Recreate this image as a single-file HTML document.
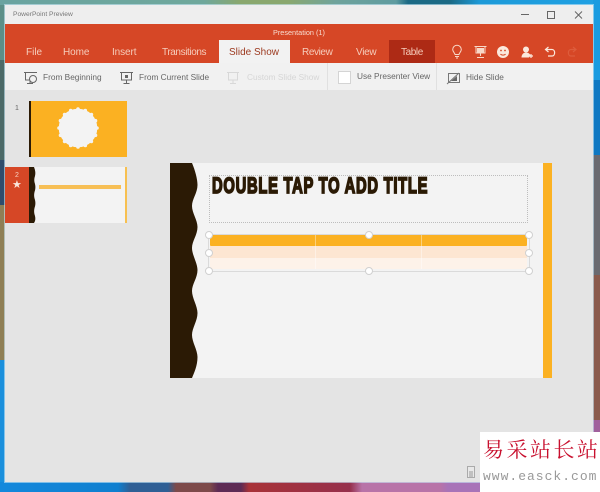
<!DOCTYPE html>
<html><head><meta charset="utf-8">
<style>
html,body{margin:0;padding:0;width:600px;height:492px;overflow:hidden;font-family:"Liberation Sans",sans-serif}
div,span{position:absolute}
.t{white-space:nowrap;line-height:14px}
.tab{top:46px;font-size:10px;color:#f6cdbc;white-space:nowrap;line-height:14px}
.rb{top:71px;font-size:8.300px;color:#666;white-space:nowrap;line-height:13px}
.h{width:6px;height:6px;border-radius:50%;background:#fff;border:1px solid #d0d0d0}
svg{position:absolute;overflow:visible}
</style></head>
<body>
<div style="left:0;top:0;width:600px;height:492px;filter:blur(.3px);overflow:hidden">
<div style="left:0;top:0;width:600px;height:492px;background:linear-gradient(90deg,#6aa3a0 0,#6fa89c 34%,#8aa86f 40%,#8aa86f 48%,#6fa39c 56%,#5f9ca0 66%,#1b6a85 68%,#1b6a85 75%,#1d9ad8 80%,#1fa0e3 100%)"></div>
<div style="left:0;top:5px;width:5px;height:55px;background:#5c8f88"></div>
<div style="left:0;top:60px;width:5px;height:100px;background:#4c6a68"></div>
<div style="left:0;top:160px;width:5px;height:45px;background:#2f4c6c"></div>
<div style="left:0;top:205px;width:5px;height:155px;background:#8f7f55"></div>
<div style="left:0;top:360px;width:5px;height:132px;background:#1a8fdc"></div>
<div style="left:593px;top:0;width:7px;height:80px;background:#1a9be0"></div>
<div style="left:593px;top:80px;width:7px;height:75px;background:#0f78c2"></div>
<div style="left:593px;top:155px;width:7px;height:120px;background:#6a6a70"></div>
<div style="left:593px;top:275px;width:7px;height:145px;background:#8a5a4c"></div>
<div style="left:593px;top:420px;width:7px;height:72px;background:#a0609c"></div>
<div style="left:0;top:482px;width:600px;height:10px;background:linear-gradient(90deg,#1488dc 0,#0f7fcf 118px,#2f5f95 130px,#2f5f95 168px,#7d4a4a 176px,#7d4a4a 210px,#5d2b55 218px,#5d2b55 241px,#a83238 249px,#96304c 350px,#b873a8 362px,#b873a8 440px,#a873b8 448px,#a873b8 100%)"></div>

<!-- window -->
<div style="left:5px;top:5px;width:588px;height:477px;background:#e4e4e4;box-shadow:0 0 0 1px rgba(200,230,245,.6)"></div>
<div style="left:5px;top:5px;width:588px;height:19px;background:#eeeeee"></div>
<div class="t" style="left:13px;top:8px;font-size:6.700px;color:#777">PowerPoint Preview</div>
<svg style="left:0;top:0" width="600" height="30"><path d="M521 14.500h8" stroke="#666" stroke-width="1"/><rect x="547.500" y="11.500" width="7" height="7" fill="none" stroke="#666"/><path d="M575 11.500l7 7M582 11.500l-7 7" stroke="#666" stroke-width="1"/></svg>

<!-- ribbon -->
<div style="left:5px;top:24px;width:588px;height:39px;background:#d64726"></div>
<div class="t" style="left:273px;top:26px;font-size:7.300px;color:#f8dcd0">Presentation (1)</div>
<div style="left:219px;top:40px;width:71px;height:23px;background:#f2f2f2"></div>
<div style="left:389px;top:40px;width:46px;height:23px;background:#ad2a15"></div>
<div class="tab" style="left:26px">File</div>
<div class="tab" style="left:63px;letter-spacing:-.1px">Home</div>
<div class="tab" style="left:112px;letter-spacing:-.1px">Insert</div>
<div class="tab" style="left:162px;letter-spacing:-.4px">Transitions</div>
<div class="tab" style="left:229px;color:#9c3a20;font-size:10px">Slide Show</div>
<div class="tab" style="left:302px;letter-spacing:-.4px">Review</div>
<div class="tab" style="left:356px;letter-spacing:-.3px">View</div>
<div class="tab" style="left:401px;letter-spacing:-.4px">Table</div>

<svg style="left:0;top:0" width="600" height="70" fill="none">
<g stroke="#f8d8c8" stroke-width="1">
<path d="M455 54.500c-.3-1.800-2.300-2.800-2.300-5a4.300 4.300 0 0 1 8.600 0c0 2.200-2 3.200-2.300 5zM455 56.500h4M456 58h2"/>
<path d="M474.500 46.500h12M476 47v6h9v-6M480.500 53v3M477 57.500h7"/>
</g>
<rect x="477" y="48" width="7" height="5" fill="#f8d8c8"/>
<circle cx="503" cy="52" r="6" fill="#fbe8dc"/>
<circle cx="501" cy="50.500" r=".9" fill="#d64726"/><circle cx="505" cy="50.500" r=".9" fill="#d64726"/>
<path d="M500.500 54c1 1.500 4 1.500 5 0" stroke="#d64726"/>
<circle cx="526" cy="49.500" r="3" fill="#fbe8dc"/>
<path d="M521.500 57.500c0-3 2-5 4.500-5s4 1.500 4.500 3l-1.500 2z" fill="#fbe8dc"/>
<path d="M529 56h4M531 54v4" stroke="#fbe8dc" stroke-width="1.200"/>
<path d="M548 56h4c3.500 0 3.500-6.500 0-6.500h-6.500M548.500 47l-3 2.500 3 2.500" stroke="#fbe8dc" stroke-width="1.200"/>
<path d="M575 56h-4c-3.500 0-3.500-6.500 0-6.500h5M573 47l3 2.500-3 2.500" stroke="#dd5c3c" stroke-width="1.200"/>
</svg>

<!-- toolbar -->
<div style="left:5px;top:63px;width:588px;height:27px;background:#f1f1f1"></div>
<div style="left:327px;top:63px;width:1px;height:27px;background:#e0e0e0"></div>
<div style="left:436px;top:63px;width:1px;height:27px;background:#e0e0e0"></div>
<div class="rb" style="left:43px">From Beginning</div>
<div class="rb" style="left:139px">From Current Slide</div>
<div class="rb" style="left:247px;color:#d6d6d6">Custom Slide Show</div>
<div style="left:338px;top:71px;width:11px;height:11px;background:#fff;border:1px solid #d4d4d4"></div>
<div class="rb" style="left:357px;top:70px">Use Presenter View</div>
<div class="rb" style="left:466px">Hide Slide</div>
<svg style="left:0;top:0" width="600" height="95" fill="none" stroke="#666" stroke-width="1">
<path d="M24 72.500h13M25.500 73v7h8M30 80v3M27 83.500h6"/><circle cx="33" cy="79" r="3.500" fill="#f1f1f1"/>
<path d="M120 72.500h13M121.500 73v7h10v-7M126.500 80v3M123.500 83.500h6"/><rect x="125" y="75" width="3" height="3" fill="#666" stroke="none"/>
<g stroke="#d8d8d8"><path d="M227 72.500h12M228.500 73v7h9v-7M233 80v3M230 83.500h6"/></g>
<rect x="448.500" y="73.500" width="11" height="9" stroke="#777"/><path d="M447 84l12-11" stroke="#777"/><path d="M451 81l6-5v5z" fill="#666" stroke="none"/>
</svg>

<!-- thumbnails -->
<div class="t" style="left:15px;top:102px;font-size:7px;color:#666">1</div>
<div style="left:29px;top:101px;width:98px;height:56px;background:#fbb122"></div>
<div style="left:29px;top:101px;width:2px;height:56px;background:#2b1a05"></div>
<svg style="left:57px;top:106.500px" width="42" height="42" viewBox="0 0 42 42">
<circle cx="21" cy="21" r="19.300" fill="#f3f3f3"/>
<g fill="#f3f3f3"><circle cx="21" cy="2" r="1.800"/><circle cx="28.300" cy="3.500" r="1.800"/><circle cx="34.400" cy="7.600" r="1.800"/><circle cx="38.500" cy="13.700" r="1.800"/><circle cx="40" cy="21" r="1.800"/><circle cx="38.500" cy="28.300" r="1.800"/><circle cx="34.400" cy="34.400" r="1.800"/><circle cx="28.300" cy="38.500" r="1.800"/><circle cx="21" cy="40" r="1.800"/><circle cx="13.700" cy="38.500" r="1.800"/><circle cx="7.600" cy="34.400" r="1.800"/><circle cx="3.500" cy="28.300" r="1.800"/><circle cx="2" cy="21" r="1.800"/><circle cx="3.500" cy="13.700" r="1.800"/><circle cx="7.600" cy="7.600" r="1.800"/><circle cx="13.700" cy="3.500" r="1.800"/></g>
</svg>
<div style="left:5px;top:167px;width:24px;height:56px;background:#d64726"></div>
<div class="t" style="left:15px;top:169px;font-size:7px;color:#f7d0c0">2</div>
<div class="t" style="left:12px;top:178px;font-size:11px;color:#fbe6dc">★</div>
<div style="left:29px;top:167px;width:98px;height:56px;background:#f3f3f3"></div>
<svg style="left:29px;top:167px" width="10" height="56"><path d="M0 0H5Q7 5 6 9 4.500 13 6 17 7 21 5.500 25 4.500 29 6 33 7 37 5.500 41 4.500 45 6 49 7 53 5 56H0Z" fill="#2b1a05"/></svg>
<div style="left:39px;top:185px;width:82px;height:4px;background:#f7bf55"></div>
<div style="left:125px;top:167px;width:2px;height:56px;background:#f7c050"></div>

<!-- slide -->
<div style="left:170px;top:163px;width:382px;height:215px;background:#f3f3f3"></div>
<svg style="left:170px;top:163px" width="30" height="215"><path d="M0 0H22C25 7 27.500 16 27.500 22 27.500 30 22 36 22 43 22 50 27.500 57 27.500 64 27.500 72 22 78 22 85 22 92 27.500 100 27.500 107 27.500 115 22 121 22 128 22 135 27.500 143 27.500 150 27.500 158 22 165 22 172 22 179 27.500 187 27.500 194 27.500 203 24 210 22 215H0Z" fill="#2b1a05"/></svg>
<div style="left:543px;top:163px;width:9px;height:215px;background:#fbb122"></div>

<div style="left:209px;top:175px;width:317px;height:46px;border:1px dotted #bdbdbd"></div>
<div class="t" style="left:212px;top:175px;font-size:22px;line-height:22px;font-weight:bold;color:#2b1a05;letter-spacing:1.100px;-webkit-text-stroke:1.700px #2b1a05;transform-origin:0 0;transform:scaleX(.67)">DOUBLE TAP TO ADD TITLE</div>

<div style="left:208px;top:234px;width:320px;height:36px;border:1px solid #dadada"></div>
<div style="left:210px;top:235px;width:317px;height:11px;background:#fbb122;border-radius:1px"></div>
<div style="left:210px;top:246px;width:317px;height:12px;background:#fde6d2"></div>
<div style="left:210px;top:258px;width:317px;height:11px;background:#fdf2e9"></div>
<div style="left:315px;top:235px;width:1px;height:34px;background:rgba(255,255,255,.4)"></div>
<div style="left:421px;top:235px;width:1px;height:34px;background:rgba(255,255,255,.4)"></div>
<div class="h" style="left:205px;top:231px"></div>
<div class="h" style="left:365px;top:231px"></div>
<div class="h" style="left:525px;top:231px"></div>
<div class="h" style="left:205px;top:249px"></div>
<div class="h" style="left:525px;top:249px"></div>
<div class="h" style="left:205px;top:267px"></div>
<div class="h" style="left:365px;top:267px"></div>
<div class="h" style="left:525px;top:267px"></div>

<svg style="left:467px;top:466px" width="12" height="14"><rect x=".5" y=".5" width="7" height="11" fill="#e8e8e8" stroke="#aaa"/><path d="M2 6h4M2 8h4M2 10h4" stroke="#999"/></svg>
</div>

<!-- watermark -->
<div style="left:480px;top:432px;width:120px;height:60px;background:#fff"></div>
<div class="t" style="left:483px;top:437px;font-size:21px;line-height:26px;letter-spacing:2.500px;color:#c8102e;font-family:'Liberation Serif','Noto Serif CJK SC',serif">易采站长站</div>
<div class="t" style="left:483px;top:470px;font-size:13px;line-height:14px;color:#999;font-family:'Liberation Mono',monospace;letter-spacing:1px">www.easck.com</div>
</body></html>
